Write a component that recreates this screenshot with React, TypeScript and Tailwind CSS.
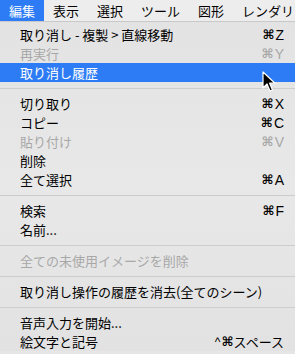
import React from "react"

type Item =
  | { kind: "sep" }
  | { kind: "item"; label: string; shortcut?: string; disabled?: boolean; active?: boolean }

const menuBar = ["編集", "表示", "選択", "ツール", "図形", "レンダリング"]

const items: Item[] = [
  { kind: "item", label: "取り消し - 複製 > 直線移動", shortcut: "Z" },
  { kind: "item", label: "再実行", shortcut: "Y", disabled: true },
  { kind: "item", label: "取り消し履歴", active: true },
  { kind: "sep" },
  { kind: "item", label: "切り取り", shortcut: "X" },
  { kind: "item", label: "コピー", shortcut: "C" },
  { kind: "item", label: "貼り付け", shortcut: "V", disabled: true },
  { kind: "item", label: "削除" },
  { kind: "item", label: "全て選択", shortcut: "A" },
  { kind: "sep" },
  { kind: "item", label: "検索", shortcut: "F" },
  { kind: "item", label: "名前..." },
  { kind: "sep" },
  { kind: "item", label: "全ての未使用イメージを削除", disabled: true },
  { kind: "sep" },
  { kind: "item", label: "取り消し操作の履歴を消去(全てのシーン)" },
  { kind: "sep" },
  { kind: "item", label: "音声入力を開始..." },
  { kind: "item", label: "絵文字と記号", shortcut: "スペース" },
]

// mac-style arrow pointer, drawn over the highlighted row
function Cursor() {
  return (
    <svg
      className="absolute left-[262px] top-[71px]"
      width="14"
      height="22"
      viewBox="0 0 14 22"
    >
      <path
        d="M1 1 L1 17 L5 13 L8 20 L10.5 19 L7.6 12.2 L13 12.2 Z"
        fill="#000"
        stroke="#fff"
        strokeWidth="1.2"
        strokeLinejoin="round"
      />
    </svg>
  )
}

function Shortcut({ keyName, ctrl }: { keyName: string; ctrl?: boolean }) {
  return (
    <span className="flex items-center">
      {ctrl && (
        <span className="mr-[1px] text-[12px]" style={{ fontFamily: '"Liberation Sans", sans-serif' }}>
          ^
        </span>
      )}
      <span className="text-[13px] font-bold" style={{ fontFamily: '"DejaVu Sans", sans-serif' }}>
        ⌘
      </span>
      <span
        className={ctrl ? "" : "ml-[1px] text-[14px]"}
        style={{ fontFamily: ctrl ? undefined : '"Liberation Sans", sans-serif' }}
      >
        {keyName}
      </span>
    </span>
  )
}

export default function App() {
  return (
    <div
      className="relative w-[295px] h-[354px] overflow-hidden bg-[#e6e6e6] text-[13px] leading-none text-black"
      style={{ fontFamily: '"Noto Sans CJK JP", "Noto Sans", sans-serif' }}
    >
      {/* menu bar */}
      <div className="flex h-[22px] items-center whitespace-nowrap bg-[#ededed] border-b border-[#c9c9c9] shadow-[0_1px_2px_rgba(0,0,0,0.12)]">
        {menuBar.map((label, i) => (
          <div
            key={label}
            className={
              i === 0
                ? "flex h-full items-center px-[9px] bg-[#2d7cf5] text-white"
                : "flex h-full items-center px-[9px]"
            }
          >
            {label}
          </div>
        ))}
      </div>

      {/* dropdown */}
      <div className="pt-[3px] bg-gradient-to-b from-[#e3e3e3] via-[#e8e8e8] to-[#e2e2e2]">
        {items.map((item, i) =>
          item.kind === "sep" ? (
            <div key={i} className="flex h-[12px] items-center">
              <div className="h-px w-full bg-[#cdcdcd]" />
            </div>
          ) : (
            <div
              key={i}
              className={
                "flex h-[19px] items-center justify-between pl-[20px] pr-[11px] whitespace-nowrap " +
                (item.active
                  ? "bg-[#2d7cf5] text-white"
                  : item.disabled
                  ? "text-[#a8a8a8]"
                  : "")
              }
            >
              <span>{item.label}</span>
              {item.shortcut && (
                <Shortcut keyName={item.shortcut} ctrl={item.shortcut === "スペース"} />
              )}
            </div>
          )
        )}
      </div>

      <Cursor />
    </div>
  )
}
